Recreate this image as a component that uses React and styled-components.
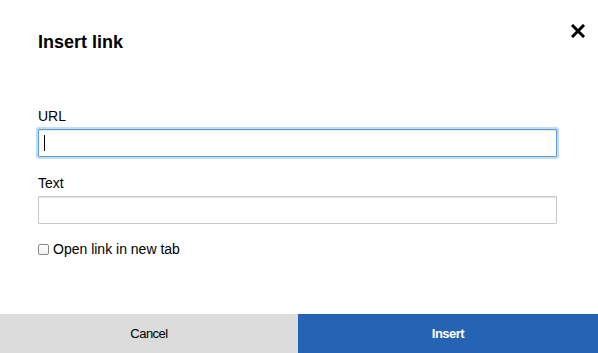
import styled, { createGlobalStyle } from "styled-components";

const GlobalStyle = createGlobalStyle`
  html, body {
    margin: 0;
    padding: 0;
    background: #fff;
  }
  body {
    font-family: "Liberation Sans", Arial, sans-serif;
    color: #000;
  }
`;

const Dialog = styled.div`
  width: 598px;
  height: 353px;
  display: flex;
  flex-direction: column;
  position: relative;
  background: #fff;
`;

const Body = styled.div`
  flex: 1;
  padding: 32px 41px 0 38px;
`;

const Title = styled.h1`
  margin: 0 0 55px;
  font-size: 18px;
  line-height: 21px;
  font-weight: bold;
`;

const CloseButton = styled.button`
  position: absolute;
  top: 22px;
  right: 11px;
  width: 18px;
  height: 18px;
  padding: 0;
  border: 0;
  background: none;
  display: flex;
  align-items: center;
  justify-content: center;
  cursor: pointer;
`;

const Field = styled.div`
  margin-bottom: ${(p) => p.$gap || 0}px;
`;

const Label = styled.label`
  display: block;
  font-size: 14px;
  line-height: 16px;
  margin-bottom: 5px;
`;

const Input = styled.input`
  display: block;
  box-sizing: border-box;
  width: 100%;
  height: 28px;
  margin: 0;
  padding: 0 6px;
  font-family: inherit;
  font-size: 14px;
  border: 1px solid ${(p) => (p.$focused ? "#5b9ddc" : "#c8c8c8")};
  border-radius: 1px;
  box-shadow: ${(p) =>
    p.$focused
      ? "0 0 0 2px #c3ddf6, inset 0 1px 1px #e6e6e6"
      : "inset 0 1px 1px #e4e4e4"};
  outline: none;
  background: #fff;
`;

const Caret = styled.span`
  position: absolute;
  left: 6px;
  top: 6px;
  width: 1px;
  height: 16px;
  background: #000;
`;

const InputWrap = styled.div`
  position: relative;
`;

const CheckRow = styled.label`
  display: flex;
  align-items: center;
  gap: 4px;
  margin-top: 17px;
  font-size: 14px;
  line-height: 16px;
`;

const Box = styled.span`
  box-sizing: border-box;
  width: 11px;
  height: 11px;
  border: 1px solid #8a8a8a;
  border-radius: 2px;
  background: linear-gradient(#fff, #f0f0f0);
`;

const Footer = styled.div`
  display: flex;
  height: 39px;
`;

const FooterButton = styled.button`
  flex: ${(p) => (p.$primary ? "0 0 300px" : "0 0 298px")};
  border: 0;
  margin: 0;
  padding: 0;
  font-family: inherit;
  font-size: 13px;
  letter-spacing: -0.5px;
  font-weight: ${(p) => (p.$primary ? "bold" : "normal")};
  color: ${(p) => (p.$primary ? "#fff" : "#000")};
  background: ${(p) => (p.$primary ? "#2563b5" : "#dcdcdc")};
  cursor: pointer;
`;

export default function App() {
  return (
    <>
      <GlobalStyle />
      <Dialog>
        <CloseButton aria-label="Close">
          <svg width="14" height="14" viewBox="0 0 14 14">
            <path
              d="M2 2 L12 12 M12 2 L2 12"
              stroke="#000"
              strokeWidth="3"
              strokeLinecap="square"
            />
          </svg>
        </CloseButton>
        <Body>
          <Title>Insert link</Title>
          <Field $gap={18}>
            <Label>URL</Label>
            <InputWrap>
              <Input $focused readOnly />
              <Caret />
            </InputWrap>
          </Field>
          <Field>
            <Label>Text</Label>
            <Input readOnly />
          </Field>
          <CheckRow>
            <Box />
            Open link in new tab
          </CheckRow>
        </Body>
        <Footer>
          <FooterButton>Cancel</FooterButton>
          <FooterButton $primary>Insert</FooterButton>
        </Footer>
      </Dialog>
    </>
  );
}
